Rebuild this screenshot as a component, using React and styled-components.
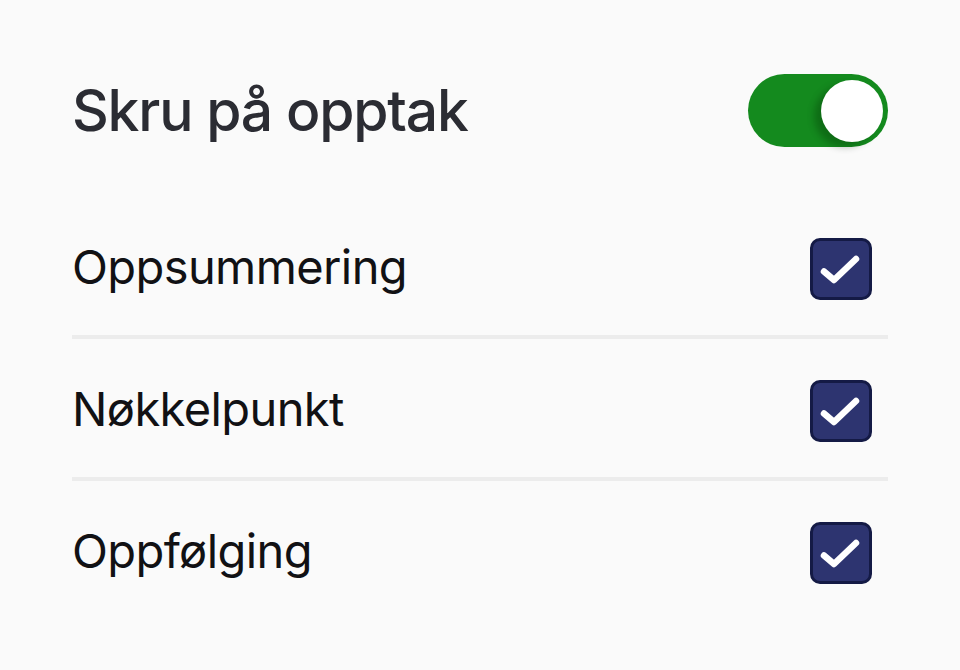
import React from "react";
import styled, { createGlobalStyle } from "styled-components";

const Global = createGlobalStyle`
  html, body { margin: 0; padding: 0; background: #fafafa; }
  body { font-family: Inter, "Noto Sans", sans-serif; }
`;

const Page = styled.div`
  width: 960px;
  height: 670px;
  box-sizing: border-box;
  padding: 74px 72px 0 72px;
  background: #fafafa;
`;

const Header = styled.div`
  display: flex;
  align-items: center;
  justify-content: space-between;
  height: 73px;
  margin-bottom: 50px;
`;

const Title = styled.h1`
  margin: 0;
  font-family: Inter, sans-serif;
  font-weight: 500;
  font-size: 57px;
  letter-spacing: -1.2px;
  color: #2b2c33;
`;

const Toggle = styled.div`
  position: relative;
  width: 140px;
  height: 73px;
  border-radius: 37px;
  background: ${(p) => (p.$on ? "#148a1e" : "#ccc")};
`;

const Knob = styled.div`
  position: absolute;
  top: 6px;
  right: 5px;
  width: 62px;
  height: 62px;
  border-radius: 50%;
  background: #fff;
  box-shadow: -7px 5px 7px rgba(0, 40, 0, 0.3);
`;

const List = styled.div`
  display: flex;
  flex-direction: column;
`;

const Row = styled.div`
  display: flex;
  align-items: center;
  justify-content: space-between;
  height: 138px;
  padding-right: 16px;
  border-bottom: ${(p) => (p.$last ? "none" : "4px solid #ececec")};
`;

const Label = styled.span`
  font-family: Inter, sans-serif;
  font-size: 47px;
  font-weight: 400;
  letter-spacing: -0.6px;
  color: #111114;
`;

const Box = styled.div`
  width: 62px;
  height: 62px;
  margin-top: 5px;
  box-sizing: border-box;
  border: 3px solid #141a45;
  border-radius: 10px;
  background: #2d3470;
  display: flex;
  align-items: center;
  justify-content: center;
`;

const Check = () => (
  <svg width="44" height="36" viewBox="0 0 44 36" fill="none">
    <path
      d="M5 20.5 L15 29 L37 8"
      stroke="#fff"
      strokeWidth="6.5"
      strokeLinecap="round"
      strokeLinejoin="round"
    />
  </svg>
);

const items = ["Oppsummering", "Nøkkelpunkt", "Oppfølging"];

export default function App() {
  return (
    <>
      <Global />
      <Page>
        <Header>
          <Title>Skru på opptak</Title>
          <Toggle $on>
            <Knob />
          </Toggle>
        </Header>
        <List>
          {items.map((t, i) => (
            <Row key={t} $last={i === items.length - 1}>
              <Label>{t}</Label>
              <Box>
                <Check />
              </Box>
            </Row>
          ))}
        </List>
      </Page>
    </>
  );
}
